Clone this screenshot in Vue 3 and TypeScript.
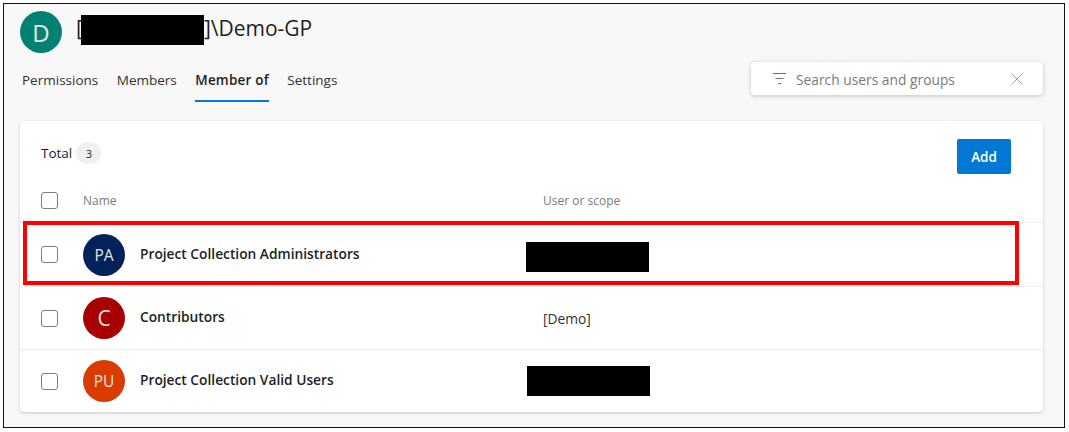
<script setup lang="ts">
interface Row {
  initials: string;
  name: string;
  color: string;
  scope?: string;
  redactOffset?: number;
  redactDrop?: number;
}

const tabs = ["Permissions", "Members", "Member of", "Settings"];
const rows: Row[] = [
  { initials: "PA", name: "Project Collection Administrators", color: "#04225a", redactOffset: -17, redactDrop: 4 },
  { initials: "C", name: "Contributors", color: "#a80000", scope: "[Demo]" },
  { initials: "PU", name: "Project Collection Valid Users", color: "#da3b01", redactOffset: -16, redactDrop: 0 },
];
</script>

<template>
  <div class="page">
    <div class="frame">
      <header class="head">
        <div class="avatar big">D</div>
        <h1 class="title">[<span class="redact title-redact"></span>]\Demo-GP</h1>
      </header>

      <div class="bar">
        <nav class="tabs">
          <span v-for="t in tabs" :key="t" class="tab" :class="{ active: t === 'Member of' }">{{ t }}</span>
        </nav>
        <div class="search">
          <svg class="filter" width="13" height="11" viewBox="0 0 13 11" fill="none" stroke="#6f6f6f" stroke-width="1">
            <path d="M0 .5h13M2.5 5.5h8M5 10.5h3" />
          </svg>
          <span class="placeholder">Search users and groups</span>
          <svg class="close" width="12" height="12" viewBox="0 0 12 12" fill="none" stroke="#a6a6a6" stroke-width="1">
            <path d="M.5.5l11 11M11.5.5l-11 11" />
          </svg>
        </div>
      </div>

      <section class="card">
        <div class="card-top">
          <div class="total">
            <span>Total</span>
            <span class="badge">3</span>
          </div>
          <button class="add" type="button">Add</button>
        </div>
        <div class="thead">
          <span class="check"></span>
          <span class="col-name">Name</span>
          <span class="col-scope">User or scope</span>
        </div>
        <div v-for="r in rows" :key="r.name" class="row">
          <span class="check"></span>
          <div class="avatar" :class="{ single: r.initials.length === 1 }" :style="{ background: r.color }">{{ r.initials }}</div>
          <span class="row-name">{{ r.name }}</span>
          <span v-if="r.scope" class="row-scope">{{ r.scope }}</span>
          <span
            v-else
            class="redact"
            :style="{ marginLeft: r.redactOffset + 'px', marginTop: r.redactDrop + 'px' }"
          ></span>
        </div>
      </section>

      <div class="highlight"></div>
    </div>
  </div>
</template>

<style>
html,
body {
  margin: 0;
  background: #fff;
}
</style>

<style scoped>
.page {
  width: 1069px;
  height: 432px;
  padding: 3px 3px 0 3px;
  box-sizing: border-box;
  font-family: "Open Sans", "Noto Sans", sans-serif;
  color: #201f1e;
}
.frame {
  position: relative;
  width: 1062px;
  height: 425px;
  box-sizing: border-box;
  border: 1px solid #111;
  background: #f8f8f8;
  padding: 7px 21px 0 16px;
}
.head {
  display: flex;
  align-items: center;
  gap: 14px;
  height: 42px;
}
.avatar {
  width: 42px;
  height: 42px;
  border-radius: 50%;
  flex: none;
  display: flex;
  align-items: center;
  justify-content: center;
  color: #e4e4e4;
  font-size: 15.5px;
}
.avatar.single {
  font-size: 21px;
}
.avatar.big {
  background: #008272;
  font-size: 24px;
}
.title {
  margin: -4px 0 0;
  font-size: 21px;
  font-weight: 400;
  line-height: 26px;
  white-space: nowrap;
  display: flex;
  align-items: flex-start;
}
.redact {
  display: block;
  background: #000;
  width: 123px;
  height: 30px;
  flex: none;
}
.title-redact {
  margin-left: -2px;
}
.bar {
  display: flex;
  justify-content: space-between;
  align-items: flex-start;
  margin-top: 9px;
  height: 59px;
}
.tabs {
  display: flex;
  gap: 18.5px;
  margin-left: 2px;
}
.tab {
  font-size: 13.5px;
  line-height: 19px;
  padding: 9px 0 10px;
  border-bottom: 2px solid transparent;
  color: #323130;
}
.tab.active {
  font-weight: 600;
  letter-spacing: 0.2px;
  color: #201f1e;
  border-bottom-color: #0078d4;
}
.search {
  width: 292px;
  height: 33px;
  background: #fff;
  border-radius: 4px;
  box-shadow: 0 1px 4px rgba(0, 0, 0, 0.22);
  display: flex;
  align-items: center;
  padding: 0 20px 0 22px;
  box-sizing: border-box;
}
.filter {
  flex: none;
}
.placeholder {
  margin-left: 10px;
  margin-top: 2px;
  font-size: 13.8px;
  color: #7a7a7a;
  flex: 1;
}
.close {
  flex: none;
}
.card {
  background: #fff;
  border-radius: 4px;
  box-shadow: 0 1px 3px rgba(0, 0, 0, 0.2);
  height: 291px;
  box-sizing: border-box;
}
.card-top {
  display: flex;
  justify-content: space-between;
  align-items: flex-start;
  height: 59px;
  padding: 18px 32px 0 21px;
  box-sizing: border-box;
}
.total {
  display: flex;
  align-items: center;
  gap: 4px;
  font-size: 13.5px;
  margin-top: 3px;
}
.badge {
  width: 25px;
  height: 22px;
  border-radius: 11px;
  background: #f0f0f0;
  font-size: 11px;
  display: flex;
  align-items: center;
  justify-content: center;
}
.add {
  width: 54px;
  height: 35px;
  border: 0;
  border-radius: 2px;
  background: #0078d4;
  color: #fff;
  font: 600 13.5px "Open Sans", sans-serif;
}
.thead {
  display: flex;
  align-items: center;
  height: 43px;
  padding: 0 0 2px 21px;
  font-size: 12px;
  color: #7a7a7a;
  box-sizing: border-box;
  border-bottom: 1px solid #eee;
}
.check {
  width: 17px;
  height: 17px;
  box-sizing: border-box;
  border: 1px solid #7d7d7d;
  border-radius: 3px;
  flex: none;
}
.col-name {
  margin-left: 25px;
  width: 460px;
}
.col-scope {
  flex: none;
}
.row {
  display: flex;
  align-items: center;
  height: 63px;
  padding-left: 21px;
  box-sizing: border-box;
  border-bottom: 1px solid #eee;
}
.row:nth-child(3) {
  height: 64px;
}
.row:last-child {
  height: 62px;
  border-bottom: 0;
}
.row .avatar {
  margin-left: 25px;
}
.row-name {
  margin-left: 15px;
  width: 403px;
  flex: none;
  font-size: 13.75px;
  font-weight: 600;
  color: #201f1e;
  position: relative;
  top: -2px;
}
.row:nth-child(3) .row-name {
  top: -1px;
}
.row-scope {
  font-size: 13.8px;
  color: #323130;
}
.highlight {
  position: absolute;
  left: 19px;
  top: 217px;
  width: 996px;
  height: 64px;
  box-sizing: border-box;
  border: 4px solid #f00;
  pointer-events: none;
}
</style>
